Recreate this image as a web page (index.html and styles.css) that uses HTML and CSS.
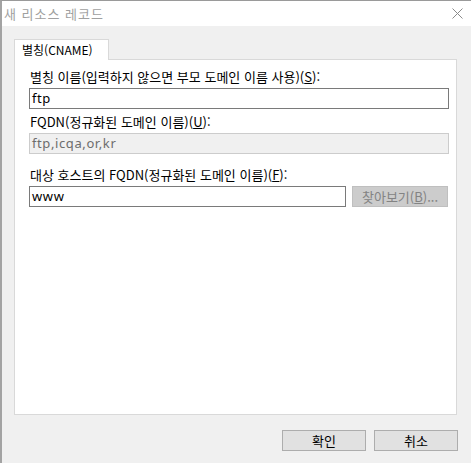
FILE: index.html
```html
<!DOCTYPE html>
<html lang="ko">
<head>
<meta charset="utf-8">
<link rel="stylesheet" href="styles.css">
</head>
<body>
<div class="window">
  <div class="titlebar">
    <span class="title">새 리소스 레코드</span>
    <svg class="close" width="11" height="11" viewBox="0 0 11 11"><path d="M0.5 0.5 L10.5 10.5 M10.5 0.5 L0.5 10.5" stroke="#8a8a8a" stroke-width="1" fill="none"/></svg>
  </div>
  <div class="client">
    <div class="tabs"><div class="tab">별칭(CNAME)</div></div>
    <div class="panel">
      <div class="field">
        <div class="label">별칭 이름(입력하지 않으면 부모 도메인 이름 사용)(<u>S</u>):</div>
        <div class="input wide">ftp</div>
      </div>
      <div class="field">
        <div class="label">FQDN(정규화된 도메인 이름)(<u>U</u>):</div>
        <div class="input wide disabled">ftp,icqa,or,kr</div>
      </div>
      <div class="field third">
        <div class="label">대상 호스트의 FQDN(정규화된 도메인 이름)(<u>F</u>):</div>
        <div class="row">
          <div class="input narrow">www</div>
          <div class="btn browse">찾아보기(<u>B</u>)...</div>
        </div>
      </div>
    </div>
    <div class="buttons">
      <div class="btn action">확인</div>
      <div class="btn action">취소</div>
    </div>
  </div>
</div>
</body>
</html>
```
FILE: styles.css
```css
* { box-sizing: border-box; }
html, body { margin: 0; padding: 0; }
body {
  width: 471px;
  height: 463px;
  overflow: hidden;
  font-family: "Noto Sans CJK KR", "Noto Sans", sans-serif;
  font-size: 13px;
  color: #000;
}
.window {
  width: 471px;
  height: 463px;
  border-top: 1px solid #9a9a9a;
  border-left: 2px solid #a3a3a3;
  background: #f0f0f0;
  display: flex;
  flex-direction: column;
}
.titlebar {
  height: 25px;
  background: #fff;
  display: flex;
  align-items: center;
  justify-content: space-between;
  padding: 0 8px 0 2px;
}
.title {
  color: #a0a0a0;
  font-size: 13px;
  letter-spacing: 1px;
  line-height: 16px;
}
.close { display: block; }
.client {
  flex: 1;
  padding: 13px 13px 0 12px;
  display: flex;
  flex-direction: column;
}
.tabs { display: flex; }
.tab {
  position: relative;
  z-index: 1;
  width: 95px;
  height: 21px;
  margin-bottom: -1px;
  background: #fff;
  border: 1px solid #d9d9d9;
  border-bottom: none;
  padding-left: 7px;
  font-size: 12px;
  line-height: 19px;
}
.panel {
  width: 443px;
  height: 356px;
  background: #fff;
  border: 1px solid #d9d9d9;
  padding: 9px 0 0 14px;
  display: flex;
  flex-direction: column;
}
.field { display: flex; flex-direction: column; margin-bottom: 5px; }
.field.third { margin-top: 8px; }
.label {
  line-height: 16px;
  padding-left: 1px;
  margin-bottom: 3px;
}
.input {
  height: 21px;
  border: 1px solid #7a7a7a;
  background: #fff;
  padding-left: 2px;
  font-family: "Noto Sans", sans-serif;
  font-size: 13px;
  letter-spacing: 0.6px;
  line-height: 19px;
}
.input.wide { width: 420px; }
.input.narrow { width: 317px; }
.input.disabled {
  background: #f0f0f0;
  border-color: #cccccc;
  color: #6d6d6d;
}
.row { display: flex; gap: 6px; }
.btn {
  height: 21px;
  display: flex;
  align-items: center;
  justify-content: center;
  line-height: 19px;
}
.browse {
  width: 96px;
  background: #cccccc;
  border: 1px solid #bfbfbf;
  color: #838383;
}
.buttons {
  display: flex;
  justify-content: flex-end;
  gap: 8px;
  margin-top: 15px;
}
.action {
  width: 84px;
  background: #e1e1e1;
  border: 1px solid #adadad;
}
```
